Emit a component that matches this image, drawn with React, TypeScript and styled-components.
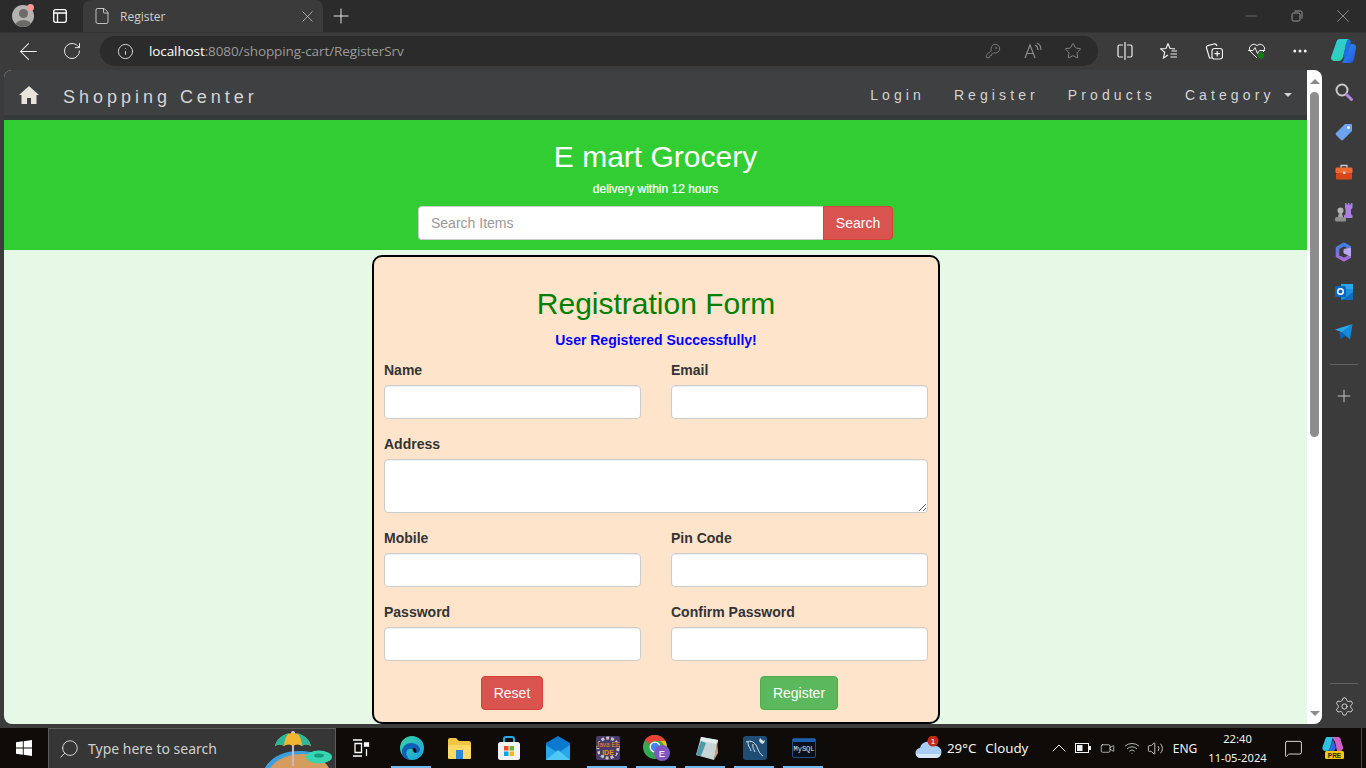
import React from 'react';
import styled, {createGlobalStyle} from 'styled-components';
import {
    ArrowLeft, RotateCw, Info, KeyRound, Star, Plus, X, Minus, Settings, ChevronUp, Search as SearchGlyph,
    MoreHorizontal, File, Volume2, Wifi, Video, MessageSquare
} from 'lucide-react';

const GlobalStyle = createGlobalStyle`
  html, body { margin: 0; padding: 0; width: 1366px; height: 768px; overflow: hidden; background: #3b3b3b; }
  * { box-sizing: border-box; }
`;

const Screen = styled.div`
  width: 1366px; height: 768px; display: flex; flex-direction: column;
  font-family: "Liberation Sans", Arial, sans-serif;
`;

/* ---------- browser tabs ---------- */
const TabStrip = styled.div`
  height: 32px; background: #2b2b2b; display: flex; align-items: center; flex: none;
`;
const Slot = styled.div<{$w: number}>`
  width: ${p => p.$w}px; flex: none; height: 100%; display: flex; align-items: center; justify-content: center;
  color: #e6e6e6; position: relative;
`;
const Tab = styled.div`
  width: 240px; height: 32px; background: #3b3b3b; border-radius: 8px 8px 0 0; flex: none;
  display: flex; align-items: center; padding: 0 6px 0 10px; color: #d8d8d8;
`;
const TabTitle = styled.span`
  font-family: "Open Sans", sans-serif; font-size: 12px; margin-left: 9px; flex: 1; color: #cfcfcf;
`;
const WindowControls = styled.div`
  margin-left: auto; display: flex; height: 100%; color: #9a9a9a;
`;
const Avatar = styled.div`
  width: 22px; height: 22px; border-radius: 50%; background: #b5b3b0; position: relative; overflow: hidden;
  &::before { content: ""; position: absolute; left: 7px; top: 4px; width: 9px; height: 9px; border-radius: 50%; background: #6d6b69; }
  &::after { content: ""; position: absolute; left: 3px; top: 15px; width: 17px; height: 12px; border-radius: 50%; background: #6d6b69; }
`;
const AvatarDot = styled.div`
  position: absolute; left: 27px; top: 4px; width: 7px; height: 7px; border-radius: 50%; background: #f59a95;
`;

/* ---------- browser toolbar ---------- */
const Toolbar = styled.div`
  height: 38px; background: #3b3b3b; display: flex; align-items: center; flex: none; padding: 0 0 1px 6px;
  border-top: 1px solid #333;
`;
const AddressBar = styled.div`
  width: 998px; height: 30px; margin-left: 6px; background: #2b2b2b; border-radius: 15px; flex: none;
  display: flex; align-items: center; color: #bdbdbd; padding-left: 17px;
`;
const Url = styled.div`
  font-family: "Open Sans", sans-serif; font-size: 13.5px; margin-left: 15px; color: #9a9a9a; flex: 1; letter-spacing: -0.1px;
  b { font-weight: 400; color: #fff; }
`;

/* ---------- window body ---------- */
const Body = styled.div`
  height: 654px; display: flex; flex: none; padding-left: 4px; padding-top: 0;
`;
const Viewport = styled.div`
  width: 1318px; height: 654px; display: flex; border-radius: 8px; overflow: hidden; flex: none;
`;
const Page = styled.div`
  width: 1303px; background: #e6f9e6; overflow: hidden; flex: none;
`;
const Scrollbar = styled.div`
  width: 15px; background: #fff; display: flex; flex-direction: column; align-items: center; flex: none; position: relative;
`;
const ScrollArrow = styled.div<{$down?: boolean}>`
  width: 0; height: 0; border-left: 5px solid transparent; border-right: 5px solid transparent;
  ${p => p.$down
        ? 'border-top: 5px solid #8a8a8a; margin-top: auto; margin-bottom: 8px;'
        : 'border-bottom: 5px solid #8a8a8a; margin-top: 9px;'}
`;
const ScrollThumb = styled.div`
  width: 9px; height: 345px; margin-top: 8px; background: #8d8d8d; border-radius: 5px;
`;
const Sidebar = styled.div`
  width: 44px; flex: none; background: #3b3b3b; display: flex; flex-direction: column; align-items: center;
`;
const SideIcon = styled.div<{$top?: number}>`
  height: 40px; width: 44px; flex: none; display: flex; align-items: center; justify-content: center; color: #dcdcdc;
  margin-top: ${p => p.$top ?? 0}px;
`;
const SideRule = styled.div<{$top: number}>`
  width: 28px; height: 1px; background: #636363; flex: none; margin-top: ${p => p.$top}px;
`;

/* ---------- shop page ---------- */
const Nav = styled.nav`
  height: 50px; background: #3f4042; border-bottom: 5px solid #36393a; display: flex; align-items: center;
  padding: 4px 15px 0 15px; color: #d4d4d4;
`;
const Brand = styled.div`
  font-size: 18px; letter-spacing: 3.98px; margin-left: 24px; line-height: 20px; padding-top: 4px;
`;
const NavLinks = styled.div`
  margin-left: auto; display: flex; align-items: center; gap: 29px;
`;
const NavLink = styled.a`
  font-size: 14px; letter-spacing: 4.1px; color: #d4d4d4; display: flex; align-items: center; line-height: 20px;
`;
const Caret = styled.span`
  width: 0; height: 0; margin-left: 9.5px; border-left: 4px solid transparent; border-right: 4px solid transparent;
  border-top: 4px solid #d4d4d4;
`;
const Hero = styled.header`
  height: 130px; background: #32cd32; color: #fff; display: flex; flex-direction: column; align-items: center;
  padding-top: 20px;
`;
const HeroTitle = styled.h2`
  margin: 0; font-size: 30px; font-weight: 400; line-height: 33px;
`;
const HeroSub = styled.h6`
  margin: 10px 0 0; font-size: 12px; font-weight: 400; line-height: 13px; -webkit-text-stroke: 0.2px #fff;
`;
const SearchRow = styled.form`
  display: flex; margin-top: 10px;
`;
const SearchInput = styled.input`
  width: 405px; height: 34px; border: 1px solid #ccc; border-right: 0; border-radius: 4px 0 0 4px; padding: 6px 12px;
  font: 14px "Liberation Sans", Arial, sans-serif; background: #fff; outline: none;
  &::placeholder { color: #999; opacity: 1; }
`;
const Btn = styled.button<{$bg: string; $line: string; $w: number}>`
  width: ${p => p.$w}px; height: 34px; background: ${p => p.$bg}; border: 1px solid ${p => p.$line}; color: #fff;
  font: 14px "Liberation Sans", Arial, sans-serif; border-radius: 4px; padding: 0; flex: none;
`;
const SearchBtn = styled(Btn)`
  border-radius: 0 4px 4px 0;
`;
const Card = styled.form`
  width: 568px; height: 469px; margin: 5px 0 0 368px; background: #ffe4cc; border: 2px solid #000; border-radius: 10px;
  padding: 30px 10px 0; color: #333;
`;
const FormTitle = styled.h2`
  margin: 0; text-align: center; font-size: 30px; font-weight: 400; line-height: 33px; color: #008000;
`;
const Message = styled.div`
  margin-top: 10px; text-align: center; font-size: 14px; font-weight: 700; line-height: 20px; color: #00f;
`;
const Grid = styled.div`
  display: grid; grid-template-columns: 257px 257px; column-gap: 30px; row-gap: 15px; margin-top: 10px;
`;
const Field = styled.div<{$wide?: boolean}>`
  display: flex; flex-direction: column; ${p => p.$wide && 'grid-column: 1 / 3;'}
`;
const Label = styled.label`
  font-size: 14px; font-weight: 700; line-height: 20px; margin-bottom: 5px; color: #333;
`;
const TextInput = styled.input`
  width: 100%; height: 34px; border: 1px solid #ccc; border-radius: 4px; background: #fff; padding: 6px 12px;
  box-shadow: inset 0 1px 1px rgba(0,0,0,.075); outline: none;
`;
const TextArea = styled.textarea`
  display: block; width: 100%; height: 54px; border: 1px solid #ccc; border-radius: 4px; background: #fff; padding: 6px 12px;
  box-shadow: inset 0 1px 1px rgba(0,0,0,.075); outline: none;
`;
const Actions = styled.div`
  display: grid; grid-template-columns: 256px 256px; column-gap: 31px; margin-top: 15px; justify-items: center;
`;

/* ---------- taskbar ---------- */
const Taskbar = styled.div`
  margin-top: 4px; height: 40px; flex: none; background: #0e0b08; display: flex; align-items: stretch; color: #fff;
  font-family: "Noto Sans", "Open Sans", sans-serif;
`;
const SearchBox = styled.div`
  width: 288px; flex: none; background: #363636; border: 1px solid #5c5c5c; border-bottom: 0; display: flex; align-items: center;
  padding-left: 9px; overflow: hidden; color: #e0e0e0;
`;
const SearchText = styled.span`
  font-size: 14px; margin-left: 8px; color: #cfcfcf;
`;
const Beach = styled.svg`
  margin-left: auto; flex: none;
`;
const TaskSlot = styled.div<{$on?: boolean; $gap?: number}>`
  width: 49px; flex: none; display: flex; align-items: center; justify-content: center; position: relative;
  margin-left: ${p => p.$gap ?? 0}px;
  ${p => p.$on && `&::after { content: ""; position: absolute; bottom: 0; left: 4px; width: 40px; height: 2px; background: #76b9ed; }`}
`;
const Tray = styled.div`
  margin-left: auto; display: flex; align-items: stretch; padding-right: 16px; position: relative;
`;
const TraySlot = styled(Slot)`
  height: auto; color: #f2f2f2; font-size: 12px; white-space: nowrap;
`;
const Weather = styled.div`
  width: 120px; display: flex; align-items: center; font-size: 13.3px; gap: 5px; color: #f2f2f2;
  span + span { margin-left: 4px; }
`;
const Clock = styled.div`
  width: 65px; display: flex; flex-direction: column; align-items: center; justify-content: center; font-size: 11.2px; line-height: 19px; color: #f2f2f2;
`;
const DesktopLine = styled.div`
  position: absolute; right: 4px; top: 0; bottom: 0; width: 1px; background: #4a4a4a;
`;

/* ---------- drawings ---------- */
const HomeIcon = () => <svg width="20" height="18" viewBox="0 0 20 18"><path d="M10 0 L20 9 L17.5 9 L17.5 18 L12 18 L12 12 L8 12 L8 18 L2.5 18 L2.5 9 L0 9 Z" fill="#e8e4dc"/></svg>;
const TabActions = () => <svg width="16" height="16" viewBox="0 0 16 16" fill="none" stroke="#fff" strokeWidth="1.3"><rect x="1.7" y="1.7" width="12.6" height="12.6" rx="2"/><path d="M5.5 5v9M2 5h12"/></svg>;
const RestoreIcon = () => <svg width="12" height="12" viewBox="0 0 12 12" fill="none" stroke="#9a9a9a"><rect x="1" y="3" width="8" height="8" rx="1.5"/><path d="M3.5 1h6a1.5 1.5 0 0 1 1.5 1.5v6"/></svg>;
const ReadAloud = () => <svg width="18" height="18" viewBox="0 0 18 18" fill="none" stroke="#8c8c8c" strokeWidth="1.2"><path d="M1 16 6 3l5 13M3 11.5h6"/><path d="M11 3c2 1 3 3 3 5M13 1c2.500 1 4 4 4 7"/></svg>;
const SplitIcon = () => <svg width="16" height="18" viewBox="0 0 16 18" fill="none" stroke="#f0f0f0" strokeWidth="1.2"><path d="M8 0v18M6 3H2.500A1.500 1.500 0 0 0 1 4.500v9A1.500 1.500 0 0 0 2.500 15H6M10 3h3.500A1.500 1.500 0 0 1 15 4.500v9a1.500 1.500 0 0 1-1.500 1.500H10"/></svg>;
const FavList = () => <svg width="18" height="18" viewBox="0 0 18 18" fill="none" stroke="#f0f0f0" strokeWidth="1.2"><path d="M8 1.500 10 6.500l5 .3M8 1.500 6 6.500l-5.300.4 4 3.400L3.500 16 8 13"/><path d="M11.500 9h5.500M10.500 12h6.500M10.500 15h6.500"/></svg>;
const Collections = () => <svg width="18" height="18" viewBox="0 0 18 18" fill="none" stroke="#f0f0f0" strokeWidth="1.2"><path d="M7 16H4.500L1.500 6c-.3-1 .2-2 1.300-2.300L9 2c1.500-.3 2.500.5 3 2"/><rect x="7" y="6.500" width="10.500" height="10.500" rx="2.500"/><path d="M12.200 9v5.500M9.500 11.700h5.500"/></svg>;
const Health = () => <svg width="20" height="18" viewBox="0 0 20 18"><g fill="none" stroke="#f0f0f0" strokeWidth="1"><path d="M10 16 3 9a4.500 4.500 0 0 1 7-5.500A4.500 4.500 0 0 1 17 9l-1 1"/><path d="M1 8.500h5l2-3 2.500 6 2-3h5"/></g><circle cx="14" cy="13.500" r="3.200" fill="#107c10"/></svg>;
const Copilot = ({size = 26}: {size?: number}) => <svg width={size} height={size} viewBox="0 0 26 26"><defs><linearGradient id="cpa" x1="0" y1="0" x2="1" y2="1"><stop offset="0" stopColor="#36c8e8"/><stop offset="1" stopColor="#2ad49a"/></linearGradient><linearGradient id="cpb" x1="0" y1="0" x2="1" y2="1"><stop offset="0" stopColor="#2f9bf0"/><stop offset="1" stopColor="#2450e0"/></linearGradient></defs><path d="M10 1h8l-5 18c-.6 2-2 4-4.500 4H5c-3 0-4.500-2-3.800-4L6 5c.6-2.500 2-4 4-4z" fill="url(#cpa)"/><path d="M12 25H20c2 0 3.500-1.500 4-4l2-11c.4-2-1-4-3-4h-2z" fill="url(#cpb)"/><path d="M18 1c2 0 3 1.500 2.800 4L17 19l-4 .5L16 5z" fill="#1e6fe0"/></svg>;
const SearchSide = () => <svg width="20" height="20" viewBox="0 0 20 20" fill="none"><circle cx="8" cy="8" r="5.500" stroke="#c9c9c9" strokeWidth="2"/><path d="M12.500 12.500 17.500 17.500" stroke="#b583e0" strokeWidth="3" strokeLinecap="round"/></svg>;
const TagIcon = () => <svg width="18" height="18" viewBox="0 0 18 18"><path d="M10 1h6a1 1 0 0 1 1 1v6L8 17a1.500 1.500 0 0 1-2 0l-5-5a1.500 1.500 0 0 1 0-2z" fill="#6ea3ee"/><circle cx="13.500" cy="4.500" r="1.500" fill="#e8eefc"/></svg>;
const ToolIcon = () => <svg width="18" height="16" viewBox="0 0 18 16"><path d="M6 4V1.500h6V4" fill="none" stroke="#c9c9c9" strokeWidth="1.300"/><rect x="0.500" y="3.500" width="17" height="5.500" rx="1" fill="#ef6a2e"/><rect x="1" y="9" width="16" height="6.500" rx="1" fill="#d8481a"/><rect x="8" y="7.500" width="2.500" height="2.500" fill="#d8d8d8"/></svg>;
const ChessIcon = () => <svg width="18" height="20" viewBox="0 0 18 20"><circle cx="5.500" cy="8.500" r="3" fill="#b3b3b3"/><path d="M4 11h3l1 4H3z" fill="#a8a8a8"/><rect x="0" y="15" width="11" height="4.500" rx="1.500" fill="#8f8f8f"/><path d="M10 1h1.500v1.500h1.500V1h1.500v1.500H16V1h1.500v5L16 7.500V12l1.500 1.500V16H9v-2.500L10.500 12V7.500L10 6z" fill="#ad7de0"/></svg>;
const M365Icon = () => <svg width="18" height="20" viewBox="0 0 18 20" fill="none" strokeWidth="3.600" strokeLinejoin="round"><defs><linearGradient id="m3a" x1="0" y1="0" x2="0" y2="1"><stop offset="0" stopColor="#3f7ee8"/><stop offset="1" stopColor="#a86ad8"/></linearGradient></defs><path d="M15.500 6 9 2.300 2.500 6v8L9 17.700 15.500 14" stroke="url(#m3a)"/><path d="M9 7.500 15.500 6v8L9 11z" fill="#b9a8ef" stroke="#b9a8ef" strokeWidth="1"/></svg>;
const OutlookIcon = () => <svg width="18" height="18" viewBox="0 0 18 18"><rect x="6" y="1" width="12" height="16" rx="1.500" fill="#1a8fdb"/><rect x="6" y="1" width="12" height="5" fill="#28a8ea"/><path d="M18 9v6.500a1.500 1.500 0 0 1-1.500 1.500H7z" fill="#0f6cbd"/><rect x="0" y="3" width="11" height="11" rx="1.500" fill="#0a64c2"/><circle cx="5.500" cy="8.500" r="2.800" fill="none" stroke="#fff" strokeWidth="1.500"/></svg>;
const SendIcon = () => <svg width="18" height="16" viewBox="0 0 18 16"><path d="M0 5.500 17.500 0 7 8.500z" fill="#28a8ea"/><path d="M7 8.500 17.500 0 15 15.500z" fill="#0f8ce0"/><path d="M4.500 8 7 8.500l3.500 3.500L5.500 15z" fill="#0a64c2"/></svg>;
const WinLogo = () => <svg width="16" height="16" viewBox="0 0 16 16" fill="#fff"><path d="M0 2.300 6.800 1.300V7.500H0zM7.700 1.200 16 0V7.500H7.700zM0 8.400H6.800V14.700L0 13.700zM7.700 8.400H16V16L7.700 14.800z"/></svg>;
const BeachArt = () => <Beach width="80" height="39" viewBox="-2 0 80 39"><path d="M8 39C15 28 30 23 45 24c12 1 22 6 27 15z" fill="#d69b5e"/><path d="M8 39C15 26 30 21 45 22c5 .3 9 1 12 2l-2 2C40 23 22 27 13 39z" fill="#3aa0e0"/><path d="M36 5v32" stroke="#c8b8c8" strokeWidth="2"/><circle cx="36" cy="4" r="2" fill="#d8c8d8"/><path d="M18 17C20 8 30 4 36 4s16 4 18 13c-4-2-7-2-9 0-3-2-6-2-9 0-3-2-6-2-9 0-3-2-6-2-9 0z" fill="#f2b632"/><path d="M18 17c2-9 10-12 14-13-3 3-5 8-5 13-3-2-6-2-9 0zM54 17c-2-9-10-12-14-13 3 3 5 8 5 13 3-2 6-2 9 0z" fill="#2bb89a"/><ellipse cx="62" cy="28" rx="13" ry="6.500" fill="#37d6b0"/><ellipse cx="62" cy="26.500" rx="5" ry="2" fill="#169a80"/></Beach>;
const TaskView = () => <svg width="18" height="18" viewBox="0 0 18 18" fill="none" stroke="#fff" strokeWidth="1.300"><path d="M1 1h9M1 17h9M3 4.500h6.500v9H3z"/><path d="M12.500 4h4v3h-4z" fill="#fff"/><path d="M14.500 10v7"/></svg>;
const EdgeIcon = () => <svg width="24" height="24" viewBox="0 0 24 24"><defs><linearGradient id="eda" x1="0" y1="0" x2="1" y2="1"><stop offset="0" stopColor="#3ad6a0"/><stop offset="1" stopColor="#1b9de2"/></linearGradient></defs><circle cx="12" cy="12" r="12" fill="url(#eda)"/><path d="M2 16c0-6 5-9 9-9 5 0 9 3 9 7 0 2-2 3-4 3-3 0-1-3-4-4-4-1-7 2-5 7 1 2 3 4 3 4C6 23.500 2 21 2 16z" fill="#0f5fb8"/><path d="M13 12c3 0 4 2 3 5-1 0-4-1-3-5z" fill="#0e0b08"/></svg>;
const FolderIcon = () => <svg width="24" height="22" viewBox="0 0 24 22"><path d="M1 3a2 2 0 0 1 2-2h6l3 3h10a2 2 0 0 1 2 2v14a2 2 0 0 1-2 2H3a2 2 0 0 1-2-2z" fill="#f4c542"/><rect x="1" y="8" width="23" height="14" rx="1.500" fill="#ffd966"/><rect x="9" y="13" width="7" height="9" fill="#2b88d8"/></svg>;
const StoreIcon = () => <svg width="24" height="24" viewBox="0 0 24 24"><path d="M7 6V3a2 2 0 0 1 2-2h6a2 2 0 0 1 2 2v3" fill="none" stroke="#29a9e8" strokeWidth="2"/><rect x="1" y="6" width="22" height="18" rx="2.500" fill="#f2f2f2"/><rect x="7" y="10" width="4.500" height="4.500" fill="#e8502a"/><rect x="12.500" y="10" width="4.500" height="4.500" fill="#6fb02c"/><rect x="7" y="15.500" width="4.500" height="4.500" fill="#0fa3e8"/><rect x="12.500" y="15.500" width="4.500" height="4.500" fill="#fbb812"/></svg>;
const MailIcon = () => <svg width="24" height="24" viewBox="0 0 24 24"><path d="M0 7 12 0l12 7v17H0z" fill="#0c79cf"/><path d="M0 9l12 8 12-8v15H0z" fill="#28a8ea"/><path d="M0 24 12 14l12 10z" fill="#50c8f5"/></svg>;
const JavaIcon = () => <svg width="24" height="24" viewBox="0 0 24 24"><rect width="24" height="24" rx="2" fill="#4a3a6a"/><circle cx="12" cy="12" r="10" fill="none" stroke="#c9c4c0" strokeWidth="3" strokeDasharray="3 2"/><rect x="1" y="6" width="22" height="6" fill="#4a3a6a"/><rect x="4" y="13" width="16" height="6" fill="#4a3a6a"/><text x="12" y="11" fontSize="6.500" fill="#e89020" textAnchor="middle" fontFamily="Liberation Sans">Java EE</text><text x="12" y="18.500" fontSize="7" fill="#e89020" textAnchor="middle" fontFamily="Liberation Sans" fontWeight="700">IDE</text></svg>;
const ChromeIcon = () => <svg width="27" height="26" viewBox="0 0 27 26"><circle cx="12" cy="12" r="12" fill="#34a853"/><path d="M12 0a12 12 0 0 1 10.400 6H12a6 6 0 0 0-5.400 3.400L2 5a12 12 0 0 1 10-5z" fill="#ea4335"/><path d="M22.400 6a12 12 0 0 1-5 16L12 18a6 6 0 0 0 5-12z" fill="#fbbc05"/><circle cx="12" cy="12" r="5.500" fill="#fff"/><circle cx="12" cy="12" r="4.200" fill="#4285f4"/><circle cx="19" cy="18" r="8" fill="#7e57c2"/><text x="19" y="21.500" fontSize="9.500" fill="#fff" textAnchor="middle" fontFamily="Liberation Sans">E</text></svg>;
const NotepadIcon = () => <svg width="24" height="24" viewBox="0 0 24 24"><path d="M7 1 24 4l-4 20L2 19z" fill="#c7d5d8"/><path d="M7 1 24 4l-1 4L6 5z" fill="#e6edf0"/><path d="M2 19 7 5l5 2-5 13z" fill="#4f9aa8"/><path d="M23 5l1 12-4 7z" fill="#c9a56a"/></svg>;
const WorkbenchIcon = () => <svg width="24" height="24" viewBox="0 0 24 24"><rect width="24" height="24" rx="3" fill="#1f4d73"/><path d="M3 6c5-2 9 0 11 5s3 7 6 9M5 6c0 5 2 5 3 9M10 8c-1 4 1 5 2 8" fill="none" stroke="#d5e2ea" strokeWidth="1"/><path d="M17 2l3 3 2-1-1 3-2 1-3-3z" fill="#d5e2ea"/></svg>;
const MysqlIcon = () => <svg width="24" height="20" viewBox="0 0 24 20"><rect x="0.500" y="0.500" width="23" height="19" rx="1.500" fill="#0a0f1a" stroke="#1d4f8a"/><rect x="1" y="1" width="22" height="3" fill="#1d5fae"/><text x="12" y="13" fontSize="7" fill="#e8e8e8" textAnchor="middle" fontFamily="Liberation Mono">MySQL</text></svg>;
const CloudIcon = () => <svg width="27" height="24" viewBox="0 0 27 24"><path d="M6 22a5 5 0 0 1-1-10 8 8 0 0 1 15-2 6 6 0 0 1 1 12z" fill="#a9cdf2"/><path d="M6 22a5 5 0 0 1-5-4h25a6 6 0 0 1-5 4z" fill="#d8e8fa"/><circle cx="18" cy="5" r="5.500" fill="#c42b1c"/><text x="18" y="8" fontSize="8" fill="#fff" textAnchor="middle" fontFamily="Liberation Sans">1</text></svg>;
const Battery = () => <svg width="16" height="10" viewBox="0 0 16 10" fill="none"><rect x="0.500" y="0.500" width="13" height="9" stroke="#f2f2f2"/><rect x="2" y="2" width="5.500" height="6" fill="#f2f2f2"/><rect x="14" y="3" width="2" height="4" fill="#f2f2f2"/></svg>;
const ProCopilot = () => <svg width="22" height="24" viewBox="0 0 22 24"><path d="M5 1h6L8 12c-.5 2-2 3-3.500 3h-1C1 15 0 13 .5 11L3 4C3.500 2 4 1 5 1z" fill="#30c0e0"/><path d="M10 1h6c2 0 3 2 3 4l2 6c.5 2-1 4-3 4h-3l-2-9z" fill="#d060c8"/><path d="M8 12 11 3l3 9-2 3H6z" fill="#3068e0"/><rect x="3" y="15" width="19" height="8" rx="1.500" fill="#f7c900"/><text x="12.500" y="21.500" fontSize="6.500" fontWeight="700" fill="#222" textAnchor="middle" fontFamily="Liberation Sans">PRE</text></svg>;

type FieldDef = {label: string; wide?: boolean};
const fields: FieldDef[] = [
    {label: 'Name'}, {label: 'Email'}, {label: 'Address', wide: true},
    {label: 'Mobile'}, {label: 'Pin Code'}, {label: 'Password'}, {label: 'Confirm Password'}
];

const App = () => {
    return <Screen>
        <GlobalStyle/>
        <TabStrip>
            <Slot $w={45}><Avatar/><AvatarDot/></Slot>
            <Slot $w={30}><TabActions/></Slot>
            <Slot $w={8}/>
            <Tab>
                <File size={18} strokeWidth={1.1} color="#e0e0e0"/>
                <TabTitle>Register</TabTitle>
                <X size={19} strokeWidth={1} color="#c4c4c4"/>
            </Tab>
            <Slot $w={36}><Plus size={24} strokeWidth={1}/></Slot>
            <WindowControls>
                <Slot $w={46}><Minus size={18} strokeWidth={.9} color="#8a8a8a"/></Slot>
                <Slot $w={46}><RestoreIcon/></Slot>
                <Slot $w={46}><X size={22} strokeWidth={.8} color="#a8a8a8"/></Slot>
            </WindowControls>
        </TabStrip>
        <Toolbar>
            <Slot $w={44}><ArrowLeft size={27} strokeWidth={.9} color="#f2f2f2"/></Slot>
            <Slot $w={44}><RotateCw size={20} strokeWidth={1.2} color="#e6e6e6"/></Slot>
            <AddressBar>
                <Info size={17} strokeWidth={1.3} color="#e0e0e0"/>
                <Url><b>localhost</b>:8080/shopping-cart/RegisterSrv</Url>
                <Slot $w={40}><KeyRound size={16} strokeWidth={1.2} color="#8c8c8c"/></Slot>
                <Slot $w={40}><ReadAloud/></Slot>
                <Slot $w={40}><Star size={18} strokeWidth={1.2} color="#8c8c8c"/></Slot>
                <Slot $w={5}/>
            </AddressBar>
            <Slot $w={6}/>
            <Slot $w={42}><SplitIcon/></Slot>
            <Slot $w={45}><FavList/></Slot>
            <Slot $w={45}><Collections/></Slot>
            <Slot $w={42}><Health/></Slot>
            <Slot $w={44}><MoreHorizontal size={18} strokeWidth={2} color="#f0f0f0"/></Slot>
            <Slot $w={42}><Copilot/></Slot>
        </Toolbar>
        <Body>
            <Viewport>
                <Page>
                    <Nav>
                        <HomeIcon/>
                        <Brand>Shopping Center</Brand>
                        <NavLinks>
                            <NavLink>Login</NavLink>
                            <NavLink>Register</NavLink>
                            <NavLink>Products</NavLink>
                            <NavLink>Category<Caret/></NavLink>
                        </NavLinks>
                    </Nav>
                    <Hero>
                        <HeroTitle>E mart Grocery</HeroTitle>
                        <HeroSub>delivery within 12 hours</HeroSub>
                        <SearchRow>
                            <SearchInput placeholder="Search Items"/>
                            <SearchBtn type="button" $bg="#d9534f" $line="#d43f3a" $w={70}>Search</SearchBtn>
                        </SearchRow>
                    </Hero>
                    <Card>
                        <FormTitle>Registration Form</FormTitle>
                        <Message>User Registered Successfully!</Message>
                        <Grid>
                            {fields.map(f => <Field key={f.label} $wide={f.wide}>
                                <Label>{f.label}</Label>
                                {f.wide ? <TextArea/> : <TextInput/>}
                            </Field>)}
                        </Grid>
                        <Actions>
                            <Btn type="button" $bg="#d9534f" $line="#d43f3a" $w={62}>Reset</Btn>
                            <Btn type="button" $bg="#5cb85c" $line="#4cae4c" $w={78}>Register</Btn>
                        </Actions>
                    </Card>
                </Page>
                <Scrollbar>
                    <ScrollArrow/>
                    <ScrollThumb/>
                    <ScrollArrow $down/>
                </Scrollbar>
            </Viewport>
            <Sidebar>
                <SideIcon $top={2}><SearchSide/></SideIcon>
                <SideIcon><TagIcon/></SideIcon>
                <SideIcon><ToolIcon/></SideIcon>
                <SideIcon><ChessIcon/></SideIcon>
                <SideIcon><M365Icon/></SideIcon>
                <SideIcon><OutlookIcon/></SideIcon>
                <SideIcon><SendIcon/></SideIcon>
                <SideRule $top={12}/>
                <SideIcon $top={11}><Plus size={20} strokeWidth={1}/></SideIcon>
                <SideRule $top={267}/>
                <SideIcon $top={2}><Settings size={21} strokeWidth={1.1}/></SideIcon>
            </Sidebar>
        </Body>
        <Taskbar>
            <Slot $w={48} style={{height: 'auto'}}><WinLogo/></Slot>
            <SearchBox>
                <SearchGlyph size={22} strokeWidth={1} style={{transform: 'scaleX(-1)'}}/>
                <SearchText>Type here to search</SearchText>
                <BeachArt/>
            </SearchBox>
            <TaskSlot><TaskView/></TaskSlot>
            <TaskSlot $on $gap={2}><EdgeIcon/></TaskSlot>
            <TaskSlot $gap={-2}><FolderIcon/></TaskSlot>
            <TaskSlot $gap={1}><StoreIcon/></TaskSlot>
            <TaskSlot><MailIcon/></TaskSlot>
            <TaskSlot $on $gap={1}><JavaIcon/></TaskSlot>
            <TaskSlot $on><ChromeIcon/></TaskSlot>
            <TaskSlot $on><NotepadIcon/></TaskSlot>
            <TaskSlot $on><WorkbenchIcon/></TaskSlot>
            <TaskSlot $on><MysqlIcon/></TaskSlot>
            <Tray>
                <Weather><CloudIcon/><span>29°C</span><span>Cloudy</span></Weather>
                <TraySlot $w={12}/>
                <TraySlot $w={24}><ChevronUp size={24} strokeWidth={1}/></TraySlot>
                <TraySlot $w={24}><Battery/></TraySlot>
                <TraySlot $w={24}><Video size={15} strokeWidth={1.1}/></TraySlot>
                <TraySlot $w={26}><Wifi size={16} strokeWidth={1.1}/></TraySlot>
                <TraySlot $w={20}><Volume2 size={17} strokeWidth={1.1}/></TraySlot>
                <TraySlot $w={40}>ENG</TraySlot>
                <Clock><span>22:40</span><span>11-05-2024</span></Clock>
                <TraySlot $w={46}><MessageSquare size={19} strokeWidth={1.1}/></TraySlot>
                <TraySlot $w={34}><ProCopilot/></TraySlot>
                <DesktopLine/>
            </Tray>
        </Taskbar>
    </Screen>;
};

export default App;
